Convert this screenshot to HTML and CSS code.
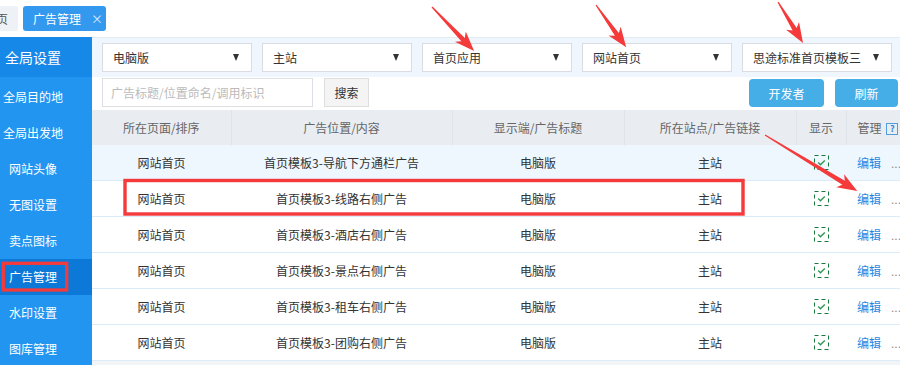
FILE: index.html
```html
<!DOCTYPE html>
<html lang="zh-CN">
<head>
    <meta charset="UTF-8">
    <meta name="viewport" content="width=device-width, initial-scale=1.0">
    <title>广告管理</title>
    <link rel="stylesheet" href="styles.css">
</head>
<body>
<div class="page">
    <div class="tabbar">
        <div class="tab tab-prev"><span>首页</span></div>
        <div class="tab tab-current">广告管理<span class="tab-close">×</span></div>
    </div>

    <div class="main">
        <aside class="sidebar">
            <div class="side-title">全局设置</div>
            <ul class="side-menu">
                <li>全局目的地</li>
                <li>全局出发地</li>
                <li>网站头像</li>
                <li>无图设置</li>
                <li>卖点图标</li>
                <li class="active">广告管理</li>
                <li>水印设置</li>
                <li>图库管理</li>
            </ul>
        </aside>

        <section class="content">
            <div class="filter-bar">
                <div class="select"><span>电脑版</span><i class="caret"></i></div>
                <div class="select"><span>主站</span><i class="caret"></i></div>
                <div class="select"><span>首页应用</span><i class="caret"></i></div>
                <div class="select"><span>网站首页</span><i class="caret"></i></div>
                <div class="select"><span>思途标准首页模板三</span><i class="caret"></i></div>
            </div>

            <div class="search-bar">
                <input class="search-input" type="text" placeholder="广告标题/位置命名/调用标识">
                <button class="btn-search">搜索</button>
                <div class="actions">
                    <button class="btn-blue btn-dev">开发者</button>
                    <button class="btn-blue btn-refresh">刷新</button>
                </div>
            </div>

            <table class="ad-table">
                <colgroup>
                    <col style="width:139px">
                    <col style="width:221px">
                    <col style="width:172px">
                    <col style="width:172px">
                    <col style="width:50px">
                    <col style="width:110px">
                </colgroup>
                <thead>
                    <tr>
                        <th>所在页面/排序</th>
                        <th>广告位置/内容</th>
                        <th>显示端/广告标题</th>
                        <th>所在站点/广告链接</th>
                        <th>显示</th>
                        <th class="col-manage">管理 <span class="help">?</span></th>
                    </tr>
                </thead>
                <tbody>
                    <tr class="hover">
                        <td>网站首页</td>
                        <td>首页模板3-导航下方通栏广告</td>
                        <td>电脑版</td>
                        <td>主站</td>
                        <td><svg class="check" width="15" height="15" viewBox="0 0 15 15"><rect x="0.5" y="0.5" width="14" height="14" fill="none" stroke="#177a3c" stroke-dasharray="4 3"/><path d="M4.2 7.6 L6.4 9.7 L10.8 5.4" fill="none" stroke="#2b9a50" stroke-width="1.4"/></svg></td>
                        <td class="col-manage"><a class="edit">编辑</a><span class="more">...</span></td>
                    </tr>
                    <tr>
                        <td>网站首页</td>
                        <td>首页模板3-线路右侧广告</td>
                        <td>电脑版</td>
                        <td>主站</td>
                        <td><svg class="check" width="15" height="15" viewBox="0 0 15 15"><rect x="0.5" y="0.5" width="14" height="14" fill="none" stroke="#177a3c" stroke-dasharray="4 3"/><path d="M4.2 7.6 L6.4 9.7 L10.8 5.4" fill="none" stroke="#2b9a50" stroke-width="1.4"/></svg></td>
                        <td class="col-manage"><a class="edit">编辑</a><span class="more">...</span></td>
                    </tr>
                    <tr>
                        <td>网站首页</td>
                        <td>首页模板3-酒店右侧广告</td>
                        <td>电脑版</td>
                        <td>主站</td>
                        <td><svg class="check" width="15" height="15" viewBox="0 0 15 15"><rect x="0.5" y="0.5" width="14" height="14" fill="none" stroke="#177a3c" stroke-dasharray="4 3"/><path d="M4.2 7.6 L6.4 9.7 L10.8 5.4" fill="none" stroke="#2b9a50" stroke-width="1.4"/></svg></td>
                        <td class="col-manage"><a class="edit">编辑</a><span class="more">...</span></td>
                    </tr>
                    <tr>
                        <td>网站首页</td>
                        <td>首页模板3-景点右侧广告</td>
                        <td>电脑版</td>
                        <td>主站</td>
                        <td><svg class="check" width="15" height="15" viewBox="0 0 15 15"><rect x="0.5" y="0.5" width="14" height="14" fill="none" stroke="#177a3c" stroke-dasharray="4 3"/><path d="M4.2 7.6 L6.4 9.7 L10.8 5.4" fill="none" stroke="#2b9a50" stroke-width="1.4"/></svg></td>
                        <td class="col-manage"><a class="edit">编辑</a><span class="more">...</span></td>
                    </tr>
                    <tr>
                        <td>网站首页</td>
                        <td>首页模板3-租车右侧广告</td>
                        <td>电脑版</td>
                        <td>主站</td>
                        <td><svg class="check" width="15" height="15" viewBox="0 0 15 15"><rect x="0.5" y="0.5" width="14" height="14" fill="none" stroke="#177a3c" stroke-dasharray="4 3"/><path d="M4.2 7.6 L6.4 9.7 L10.8 5.4" fill="none" stroke="#2b9a50" stroke-width="1.4"/></svg></td>
                        <td class="col-manage"><a class="edit">编辑</a><span class="more">...</span></td>
                    </tr>
                    <tr>
                        <td>网站首页</td>
                        <td>首页模板3-团购右侧广告</td>
                        <td>电脑版</td>
                        <td>主站</td>
                        <td><svg class="check" width="15" height="15" viewBox="0 0 15 15"><rect x="0.5" y="0.5" width="14" height="14" fill="none" stroke="#177a3c" stroke-dasharray="4 3"/><path d="M4.2 7.6 L6.4 9.7 L10.8 5.4" fill="none" stroke="#2b9a50" stroke-width="1.4"/></svg></td>
                        <td class="col-manage"><a class="edit">编辑</a><span class="more">...</span></td>
                    </tr>
                </tbody>
            </table>
        </section>
    </div>

    <!-- red annotation marks drawn over the screenshot -->
    <svg class="marks" width="900" height="365" viewBox="0 0 900 365">
        <g fill="#f43a3a">
            <polygon transform="translate(432 7) rotate(46.3)" points="0,-0.6 45,-2.4 41,-7.5 61,0 41,7.5 45,2.4 0,0.6"/>
            <polygon transform="translate(596 5) rotate(54.5)" points="0,-0.6 36,-2.4 32,-7.5 52,0 32,7.5 36,2.4 0,0.6"/>
            <polygon transform="translate(778 2) rotate(58.6)" points="0,-0.6 32,-2.4 28,-7.5 48,0 28,7.5 32,2.4 0,0.6"/>
            <polygon transform="translate(765 135) rotate(31.3)" points="0,-0.6 92,-2.4 88,-7.5 108,0 88,7.5 92,2.4 0,0.6"/>
        </g>
        <g fill="none" stroke="#f43a3a">
            <rect x="125" y="180.5" width="618" height="33.5" stroke-width="3.4"/>
            <rect x="3.3" y="263.3" width="63.4" height="26.7" stroke-width="3.3"/>
        </g>
    </svg>
</div>
</body>
</html>
```

FILE: styles.css
```css
body {
    margin: 0;
    font-family: "Noto Sans CJK SC", sans-serif;
    font-size: 12px;
    color: #333;
    background-color: #fff;
}

.page {
    position: relative;
    width: 900px;
    height: 365px;
    overflow: hidden;
}

/* tabs on top */
.tabbar {
    display: flex;
    height: 37px;
    padding-top: 6px;
    box-sizing: border-box;
    background-color: #fff;
}

.tab {
    height: 25px;
    line-height: 25px;
    border-radius: 3px;
}

.tab-prev {
    width: 18px;
    padding-right: 10px;
    box-sizing: border-box;
    display: flex;
    justify-content: flex-end;
    overflow: hidden;
    background-color: #eef1f5;
    color: #555;
    border-radius: 0 3px 3px 0;
}

.tab-prev span {
    white-space: nowrap;
}

.tab-current {
    margin-left: 5px;
    width: 83px;
    padding-left: 10px;
    box-sizing: border-box;
    background-color: #3399ef;
    color: #fff;
}

.tab-close {
    margin-left: 10px;
    font-size: 12px;
    color: rgba(255, 255, 255, 0.85);
}

.main {
    display: flex;
    height: 328px;
}

/* left menu */
.sidebar {
    width: 92px;
    flex-shrink: 0;
    background-color: #2295f1;
    color: #fff;
}

.side-title {
    height: 40px;
    line-height: 40px;
    padding-right: 26px;
    text-align: center;
    font-size: 14px;
    background-color: #1689e8;
}

.side-menu {
    list-style: none;
    margin: 2px 0 0;
    padding: 0;
}

.side-menu li {
    height: 36px;
    line-height: 36px;
    padding-right: 26px;
    text-align: center;
    white-space: nowrap;
}

.side-menu li.active {
    background-color: #0c79d8;
}

/* right side */
.content {
    flex: 1;
    min-width: 0;
    overflow: hidden;
    background-color: #f3f4f7;
}

.filter-bar {
    display: flex;
    gap: 10px;
    height: 40px;
    padding: 5px 0 0 10px;
    box-sizing: border-box;
    border-top: 1px solid #e2eaf2;
    background-color: #eff6fd;
}

.select {
    display: flex;
    align-items: center;
    justify-content: space-between;
    width: 150px;
    height: 29px;
    padding: 0 12px 0 10px;
    box-sizing: border-box;
    flex-shrink: 0;
    border: 1px solid #d9dde3;
    background-color: #fff;
    white-space: nowrap;
}

.caret {
    width: 0;
    height: 0;
    border-left: 3.5px solid transparent;
    border-right: 3.5px solid transparent;
    border-top: 7px solid #333;
}

.search-bar {
    display: flex;
    align-items: flex-start;
    height: 33px;
    padding: 1px 2px 0 10px;
    box-sizing: border-box;
    background-color: #fff;
}

.search-input {
    width: 211px;
    height: 29px;
    padding: 0 8px;
    box-sizing: border-box;
    border: 1px solid #dcdfe4;
    font-family: inherit;
    font-size: 12px;
    outline: none;
}

.search-input::placeholder {
    color: #bbb;
}

.btn-search {
    margin-left: 11px;
    width: 45px;
    height: 29px;
    padding: 0;
    border: 1px solid #dedede;
    background-color: #f4f4f4;
    font-family: inherit;
    font-size: 12px;
    color: #333;
}

.actions {
    display: flex;
    gap: 11px;
    margin-left: auto;
    margin-top: 1px;
}

.btn-blue {
    height: 28px;
    padding: 0;
    border: none;
    border-radius: 4px;
    background-color: #45aee6;
    color: #fff;
    font-family: inherit;
    font-size: 12px;
}

.btn-dev { width: 75px; }
.btn-refresh { width: 63px; }

/* table */
.ad-table {
    width: 864px;
    table-layout: fixed;
    border-collapse: collapse;
}

.ad-table th {
    height: 35px;
    padding: 0;
    font-weight: normal;
    color: #666;
    background-color: #e9edf2;
    border-right: 1px solid #dfe4ea;
}

.ad-table td {
    height: 35px;
    padding: 0;
    text-align: center;
    background-color: #fff;
    border-bottom: 1px solid #dcebf8;
}

.ad-table tr.hover td {
    background-color: #eef7fe;
}

.ad-table .col-manage {
    text-align: left;
    padding-left: 11px;
}

.check {
    display: block;
    margin: 0 auto;
}

.help {
    display: inline-block;
    width: 10px;
    height: 10px;
    line-height: 10px;
    margin-left: 2px;
    border: 1px solid #4e9ee0;
    text-align: center;
    font-size: 9px;
    font-weight: bold;
    color: #2a88df;
    vertical-align: 1px;
}

.edit {
    color: #1f88e3;
}

.more {
    margin-left: 10px;
    font-family: "Liberation Sans", sans-serif;
    color: #888;
}

.marks {
    position: absolute;
    left: 0;
    top: 0;
    pointer-events: none;
}
```
